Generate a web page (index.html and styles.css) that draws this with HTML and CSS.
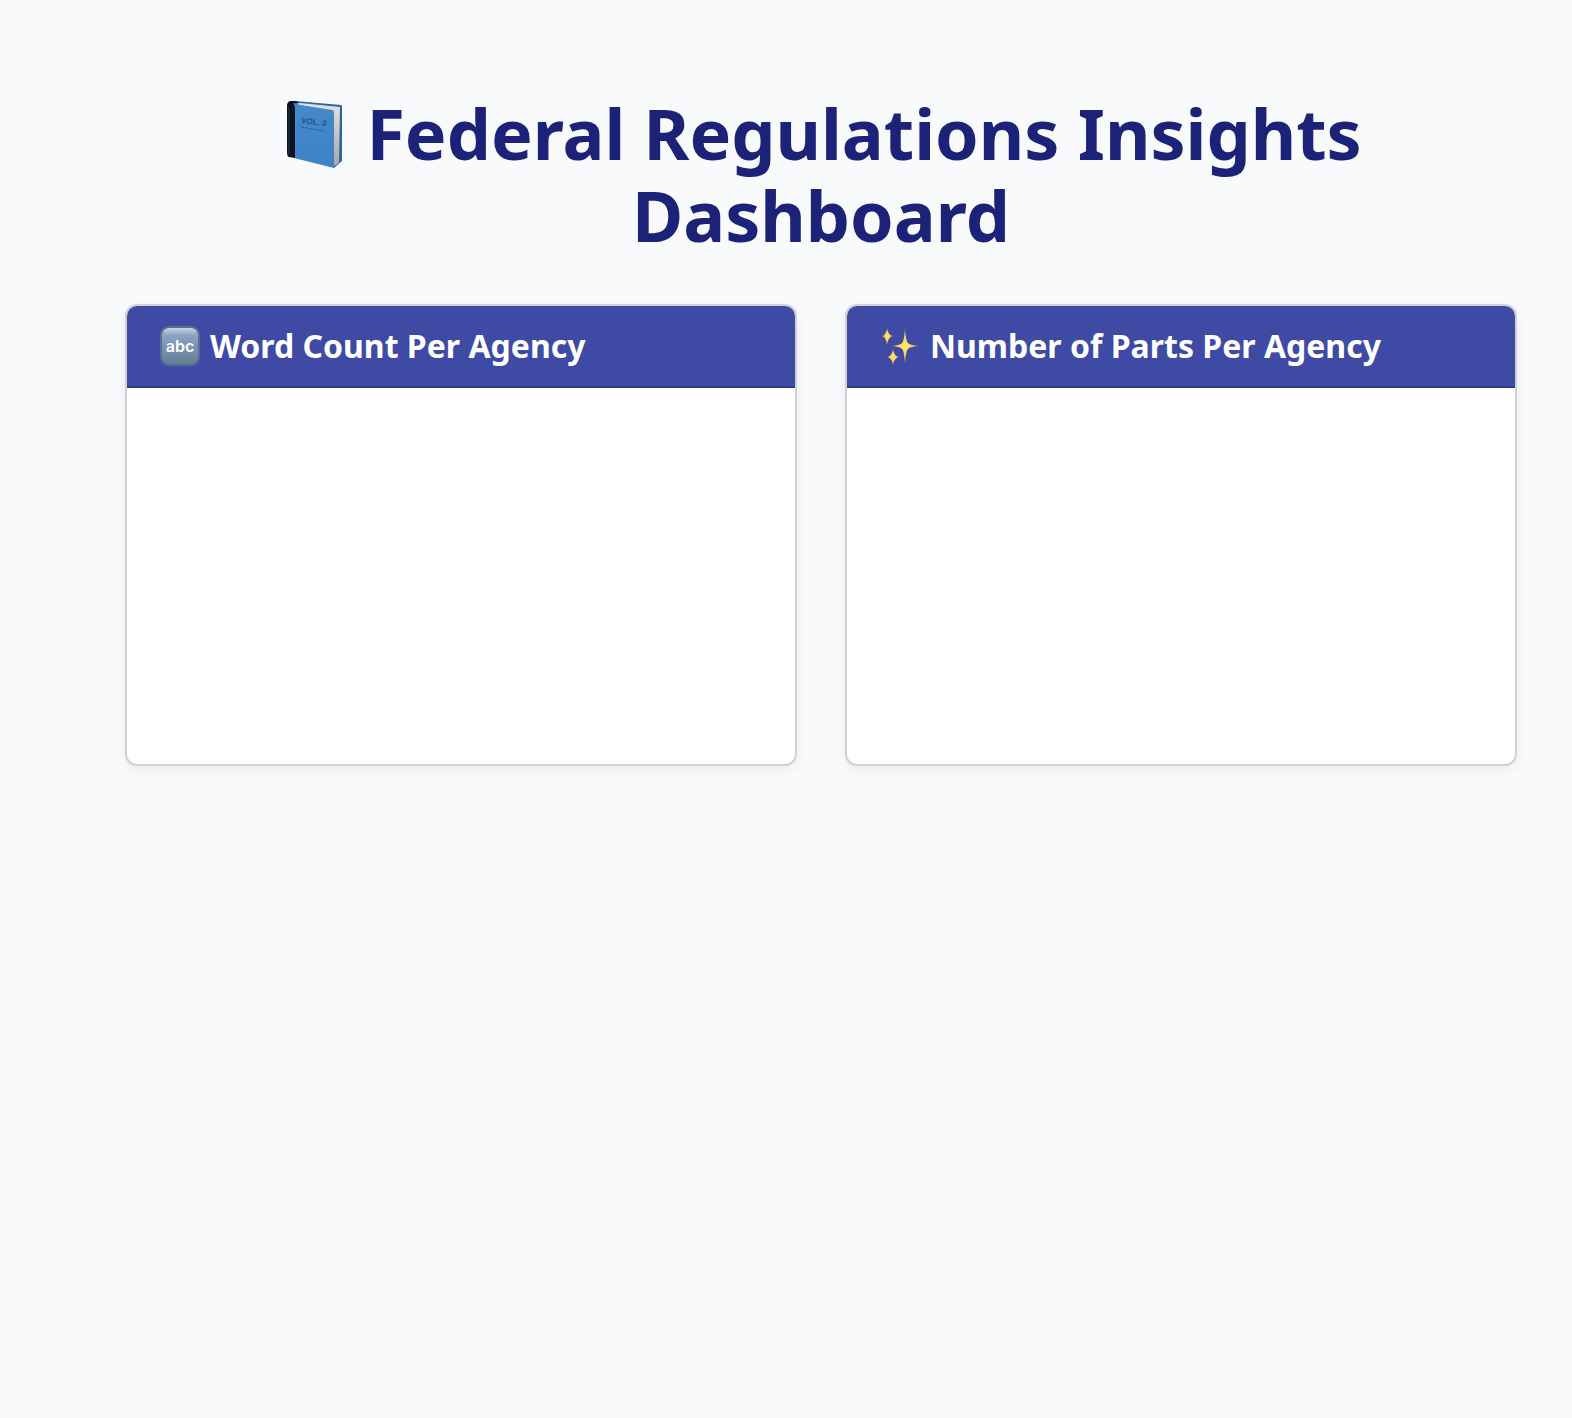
FILE: index.html
```html
<!DOCTYPE html>
<html lang="en">
<head>
<meta charset="utf-8">
<meta name="viewport" content="width=device-width, initial-scale=1">
<title>Federal Regulations Insights Dashboard</title>
<link rel="stylesheet" href="styles.css">
</head>
<body>
<main class="dashboard">
  <h1 class="title">
    <svg class="title-icon" viewBox="0 0 58 70" aria-hidden="true">
      <defs>
        <linearGradient id="cover" x1="0" y1="0" x2="0" y2="1"><stop offset="0" stop-color="#4489cb"/><stop offset="1" stop-color="#3f82c6"/></linearGradient>
        <linearGradient id="pages" x1="0" y1="0" x2="0" y2="1"><stop offset="0" stop-color="#e4e3e0"/><stop offset="1" stop-color="#a5a5a5"/></linearGradient>
      </defs>
      <path d="M5 2Q6 1 9 1L55 5Q56 5 56 7V61L48 68L44 60Z" fill="#2a659f"/>
      <path d="M10 4L14 3L54 7L53 63L47 67L44 12Z" fill="url(#pages)"/>
      <path d="M8 4L46 10Q48 10 48 13V68L8 58Z" fill="url(#cover)"/>
      <path d="M1 6Q1 2 4 1L9 1Q12 1 12 3L7 3Q8 5 9 7V58L3 57Q1 56 1 53Z" fill="#0b131e"/>
      <path d="M3 7V55" stroke="#25384a" stroke-width="1"/>
      <text class="volume" x="15" y="23" transform="rotate(7 15 23)">VOL. 3</text>
      <path d="M15 27L38 31" stroke="#285f98" stroke-width="1" stroke-dasharray="3 1"/>
    </svg>
    Federal Regulations Insights Dashboard
  </h1>
  <div class="cards">
    <section class="card">
      <h2 class="card-header">
        <svg class="card-icon" viewBox="0 0 40 40" aria-hidden="true">
          <defs><linearGradient id="key" x1="0" y1="0" x2="0" y2="1"><stop offset="0" stop-color="#cbdbea"/><stop offset=".22" stop-color="#88a5c4"/><stop offset=".55" stop-color="#7893af"/><stop offset="1" stop-color="#657b93"/></linearGradient></defs>
          <rect x="1" y="1" width="38" height="38" rx="8" fill="url(#key)" stroke="#586e91" stroke-width="2"/>
          <text class="key-text" x="20" y="26">abc</text>
        </svg>
        Word Count Per Agency
      </h2>
      <div class="card-body"></div>
    </section>
    <section class="card">
      <h2 class="card-header">
        <svg class="card-icon" viewBox="0 0 40 40" aria-hidden="true">
          <defs><radialGradient id="spark"><stop offset="0" stop-color="#ffe96b"/><stop offset=".45" stop-color="#f7d65b"/><stop offset="1" stop-color="#d98c43"/></radialGradient></defs>
          <g fill="url(#spark)">
            <path d="M25 2Q26 16 28 17Q29 19 39 20Q29 21 28 23Q26 24 25 38Q24 24 22 23Q21 21 11 20Q21 19 22 17Q24 16 25 2Z"/>
            <path d="M7 2Q8 9 13 10Q8 11 7 19Q6 11 2 10Q6 9 7 2Z"/>
            <path d="M13 23Q14 30 19 31Q14 32 13 39Q12 32 7 31Q12 30 13 23Z"/>
          </g>
        </svg>
        Number of Parts Per Agency
      </h2>
      <div class="card-body"></div>
    </section>
  </div>
</main>
</body>
</html>
```
FILE: styles.css
```css
* {
  box-sizing: border-box;
}

body {
  margin: 0;
  background: #f8fafc;
  font-family: Tahoma, "Noto Sans", sans-serif;
}

.dashboard {
  padding: 92px 55px 48px 125px;
}

.title {
  margin: 0 0 48px;
  color: #1c2278;
  font-size: 70px;
  font-weight: 700;
  line-height: 82px;
  text-align: center;
}

.title-icon {
  width: 58px;
  height: 70px;
  margin: 0 4px 0 6px;
  vertical-align: -10px;
}

.volume {
  fill: #28527f;
  font: 700 8px "Liberation Sans", sans-serif;
}

.cards {
  display: grid;
  grid-template-columns: repeat(2, minmax(0, 1fr));
  gap: 48px;
}

.card {
  overflow: hidden;
  border: 2px solid #d0d1d2;
  border-radius: 12px;
  background: #fff;
  box-shadow: 0 4px 12px rgba(0, 0, 0, 0.06);
}

.card-header {
  display: flex;
  align-items: center;
  gap: 10px;
  margin: 0;
  padding: 16px 33px;
  border-bottom: 2px solid #303d8d;
  background: #3e4aa4;
  color: #fff;
  font-size: 32px;
  font-weight: 700;
  line-height: 48px;
}

.card-icon {
  flex: none;
  width: 40px;
  height: 40px;
}

.key-text {
  fill: #fff;
  font: 600 16px Inter, sans-serif;
  text-anchor: middle;
}

.card-body {
  min-height: 376px;
}
```
